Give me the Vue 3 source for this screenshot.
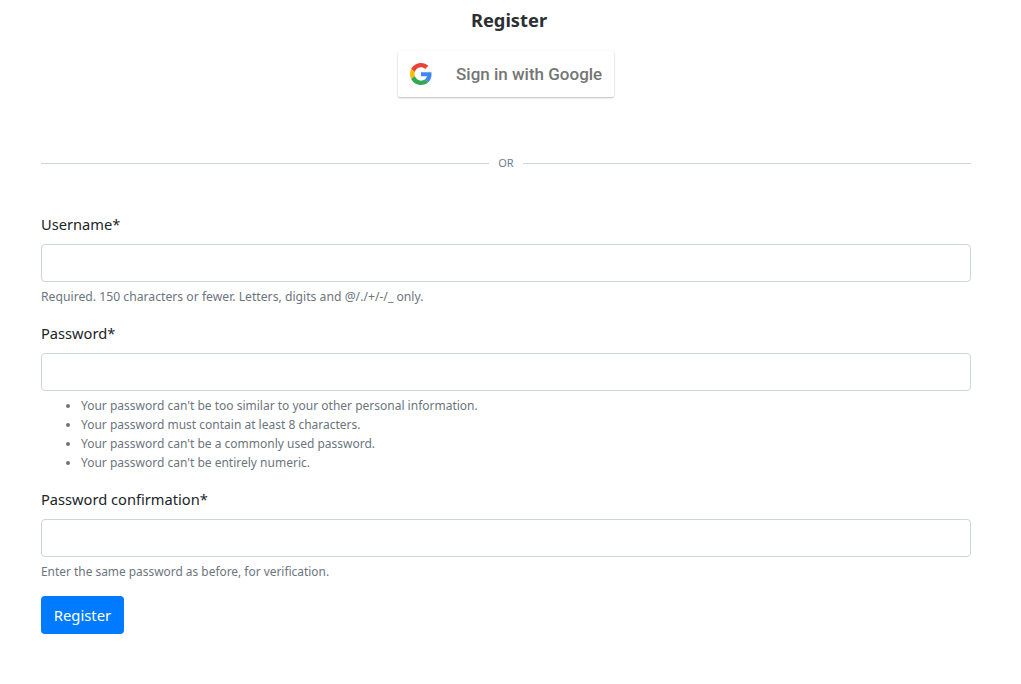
<script setup>
const rules = [
  "Your password can't be too similar to your other personal information.",
  'Your password must contain at least 8 characters.',
  "Your password can't be a commonly used password.",
  "Your password can't be entirely numeric.",
]
</script>

<template>
  <div class="page">
    <h5 class="title">Register</h5>

    <div class="social">
      <a class="google-btn" href="#">
        <svg class="g-logo" viewBox="0 0 48 48" width="22" height="22">
          <path fill="#EA4335" d="M24 9.5c3.54 0 6.71 1.22 9.21 3.6l6.85-6.85C35.9 2.38 30.47 0 24 0 14.62 0 6.51 5.38 2.56 13.22l7.98 6.19C12.43 13.72 17.74 9.5 24 9.5z" />
          <path fill="#4285F4" d="M46.98 24.55c0-1.57-.15-3.09-.38-4.55H24v9.02h12.94c-.58 2.96-2.26 5.48-4.78 7.18l7.73 6c4.51-4.18 7.09-10.36 7.09-17.65z" />
          <path fill="#FBBC05" d="M10.53 28.59c-.48-1.45-.76-2.99-.76-4.59s.27-3.14.76-4.59l-7.98-6.19C.92 16.46 0 20.12 0 24c0 3.88.92 7.54 2.56 10.78l7.97-6.19z" />
          <path fill="#34A853" d="M24 48c6.48 0 11.93-2.13 15.89-5.81l-7.73-6c-2.15 1.45-4.92 2.3-8.16 2.3-6.26 0-11.57-4.22-13.47-9.91l-7.98 6.19C6.51 42.62 14.62 48 24 48z" />
        </svg>
        <span>Sign in with Google</span>
      </a>
    </div>

    <div class="divider"><span>OR</span></div>

    <form class="form" @submit.prevent>
      <div class="group">
        <label for="username">Username*</label>
        <input id="username" type="text" />
        <small class="wide">Required. 150 characters or fewer. Letters, digits and @/./+/-/_ only.</small>
      </div>

      <div class="group">
        <label for="password">Password*</label>
        <input id="password" type="password" />
        <ul class="rules">
          <li v-for="rule in rules" :key="rule">{{ rule }}</li>
        </ul>
      </div>

      <div class="group">
        <label for="confirm">Password confirmation*</label>
        <input id="confirm" type="password" />
        <small>Enter the same password as before, for verification.</small>
      </div>

      <button type="submit">Register</button>
    </form>
  </div>
</template>

<style>
html,
body {
  margin: 0;
  background: #fff;
}
</style>

<style scoped>
.page {
  box-sizing: border-box;
  width: 1021px;
  height: 684px;
  overflow: hidden;
  padding: 0 50px 0 41px;
  font-family: "Noto Sans", "Open Sans", sans-serif;
  color: #212529;
}

.title {
  margin: 8px 0 0 6px;
  font-size: 18.3px;
  font-weight: 700;
  line-height: 24px;
  text-align: center;
  color: #2b2f33;
}

.social {
  display: flex;
  justify-content: center;
  margin-top: 19px;
}

.google-btn {
  display: flex;
  align-items: center;
  gap: 24px;
  box-sizing: border-box;
  width: 216px;
  height: 46px;
  padding-left: 12px;
  border-radius: 2px;
  background: #fff;
  box-shadow: 0 1px 2px rgba(0, 0, 0, 0.25), 0 0 1px rgba(0, 0, 0, 0.08);
  color: #757575;
  font-family: Roboto, sans-serif;
  font-size: 17px;
  font-weight: 500;
  text-decoration: none;
}

.divider {
  display: flex;
  align-items: center;
  gap: 9.5px;
  margin-top: 57px;
  color: #6c7d92;
  font-size: 11px;
  line-height: 18px;
}

.divider::before,
.divider::after {
  content: "";
  flex: 1;
  height: 1px;
  background: #ced4da;
}

.form {
  margin-top: 40px;
}

.group {
  margin-bottom: 15px;
}

label {
  display: block;
  margin-bottom: 8px;
  font-size: 14.65px;
  line-height: 24px;
}

input {
  display: block;
  box-sizing: border-box;
  width: 100%;
  height: 38px;
  border: 1px solid #ced4da;
  border-radius: 4px;
  background: #fff;
}

small {
  display: block;
  margin-top: 5px;
  color: #6c757d;
  font-size: 11.92px;
  line-height: 19px;
}

small.wide {
  font-size: 12.2px;
}

.rules {
  margin: 5px 0 0;
  padding-left: 40px;
  color: #6c757d;
  font-size: 12px;
  line-height: 19px;
}

button {
  display: block;
  height: 38px;
  width: 83px;
  padding: 0;
  border: 0;
  border-radius: 4px;
  background: #007bff;
  color: #fff;
  font: inherit;
  font-size: 14.8px;
}
</style>
